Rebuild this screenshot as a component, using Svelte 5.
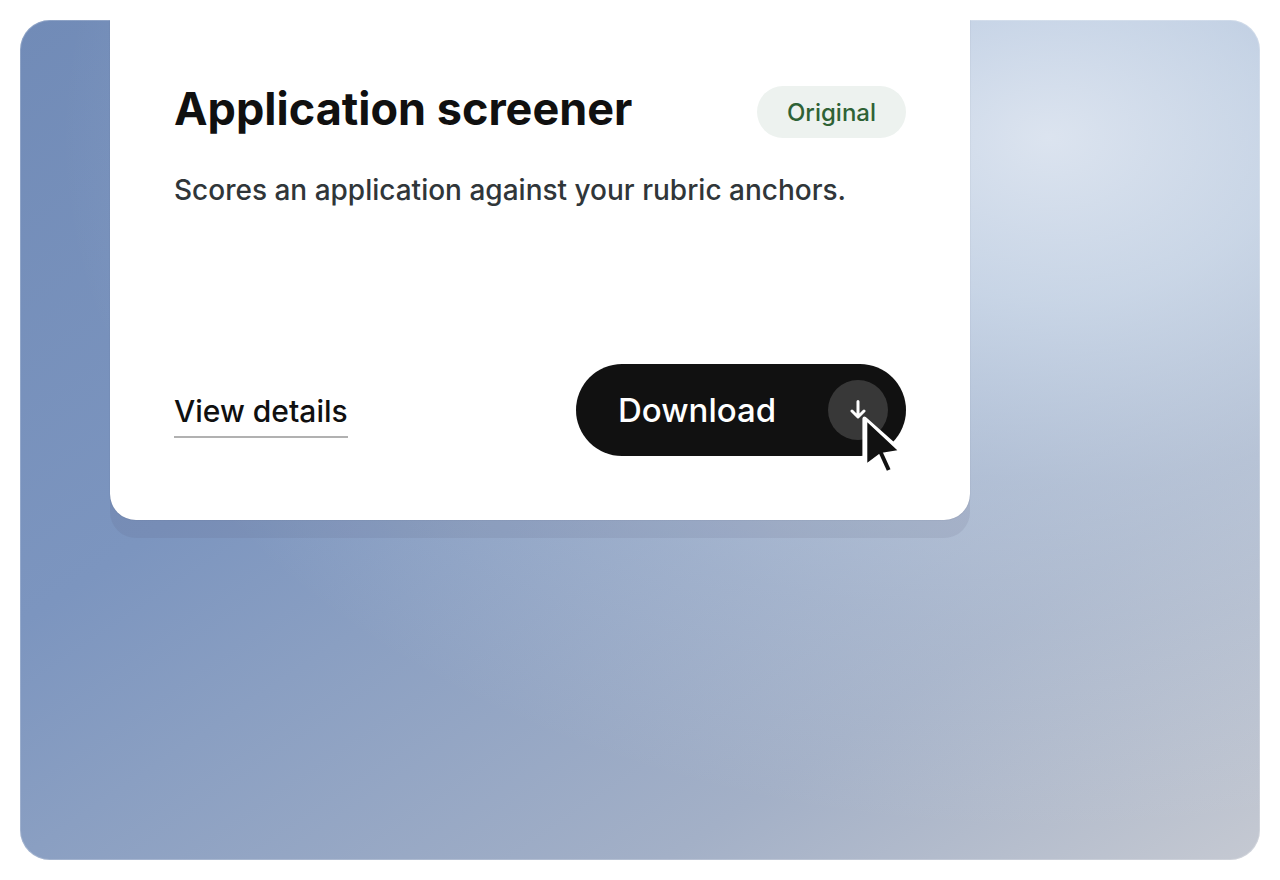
<script>
  let {
    title = 'Application screener',
    badge = 'Original',
    description = 'Scores an application against your rubric anchors.',
  } = $props();
</script>

<main class="stage">
  <article class="card">
    <header>
      <h1>{title}</h1>
      <span class="badge">{badge}</span>
    </header>

    <p>{description}</p>

    <footer>
      <a class="details" href="#details">View details</a>
      <button type="button" class="download">
        <span>Download</span>
        <span class="disc">
          <svg class="arrow" viewBox="0 0 16 20" aria-hidden="true">
            <path d="M8 1.5v15M2 11l6 6 6-6" />
          </svg>
          <svg class="cursor" viewBox="0 0 48 64" aria-hidden="true">
            <path class="halo" d="M1.4 3.6q.6-3 3.4-1.6l36 32-4.5 4-12 4-18 8-4.9-2z" />
            <path class="halo tail" d="M19.5 37l8 18" />
            <path class="tip" d="M6.3 7.3v40.4l11.7-8.6q1.5-1 3-1.3l15.3-2.5z" />
            <path class="tail" d="M19.5 37l8.2 18" />
          </svg>
        </span>
      </button>
    </footer>
  </article>
</main>

<style>
  :global(body) {
    background: #fff;
  }
  .stage {
    box-sizing: border-box;
    min-height: calc(100vh - 40px);
    margin: 20px;
    padding: 0 90px;
    border-radius: 30px;
    overflow: hidden;
    background:
      radial-gradient(
        ellipse at 83% 14%,
        rgba(232, 238, 246, 0.87) 0%,
        rgba(226, 236, 246, 0.68) 16%,
        rgba(226, 236, 246, 0.32) 34%,
        rgba(226, 236, 246, 0.16) 48%,
        rgba(226, 236, 246, 0) 68%
      ),
      linear-gradient(146deg, #718bb7 0%, #7c95bf 36%, #8a9fc2 50%, #a3b0c7 76%, #c5c9d2 100%);
    box-shadow: inset 0 0 0 1px rgba(255, 255, 255, 0.2);
    font-family: Inter, 'Liberation Sans', sans-serif;
    color: #101010;
  }
  .card {
    box-sizing: border-box;
    max-width: 860px;
    padding: 66px 64px 64px;
    border-radius: 0 0 26px 26px;
    background: #fff;
    box-shadow:
      0 0 1px rgba(50, 60, 90, 0.4),
      0 18px 0 rgba(80, 80, 110, 0.1);
  }
  header,
  footer {
    display: flex;
    align-items: center;
    justify-content: space-between;
    gap: 24px;
  }
  header {
    align-items: flex-start;
  }
  h1 {
    margin: 0;
    font-size: 45px;
    font-weight: 700;
    line-height: 46px;
  }
  .badge {
    padding: 2px 30px 0;
    border-radius: 26px;
    background: #edf2ef;
    color: #2f6235;
    font-size: 24px;
    font-weight: 500;
    line-height: 50px;
  }
  p {
    margin: 32px 0 154px;
    color: #303639;
    font-size: 28px;
    font-weight: 500;
    line-height: 40px;
  }
  .details {
    padding: 8px 0 4px;
    border-bottom: 2px solid #b1b1b1;
    color: inherit;
    font-size: 30px;
    font-weight: 500;
    line-height: 42px;
    text-decoration: none;
  }
  .download {
    display: flex;
    align-items: center;
    justify-content: space-between;
    width: 330px;
    height: 92px;
    padding: 0 18px 0 42px;
    border: 0;
    border-radius: 46px;
    background: #111;
    color: #fff;
    font: inherit;
    font-size: 33px;
    font-weight: 500;
    cursor: pointer;
  }
  .disc {
    position: relative;
    display: grid;
    place-items: center;
    width: 60px;
    height: 60px;
    border-radius: 50%;
    background: #383838;
  }
  svg {
    fill: none;
    stroke-linecap: round;
    stroke-linejoin: round;
  }
  .arrow {
    width: 16px;
    height: 20px;
    stroke: #fff;
    stroke-width: 3;
  }
  .cursor {
    position: absolute;
    top: 35px;
    left: 33px;
    width: 48px;
    height: 64px;
    overflow: visible;
    pointer-events: none;
  }
  .halo {
    fill: #fff;
  }
  .tip {
    fill: #111;
  }
  .tail {
    stroke: #111;
    stroke-width: 4;
    stroke-linecap: butt;
  }
  .halo.tail {
    stroke: #fff;
    stroke-width: 10;
  }
</style>
